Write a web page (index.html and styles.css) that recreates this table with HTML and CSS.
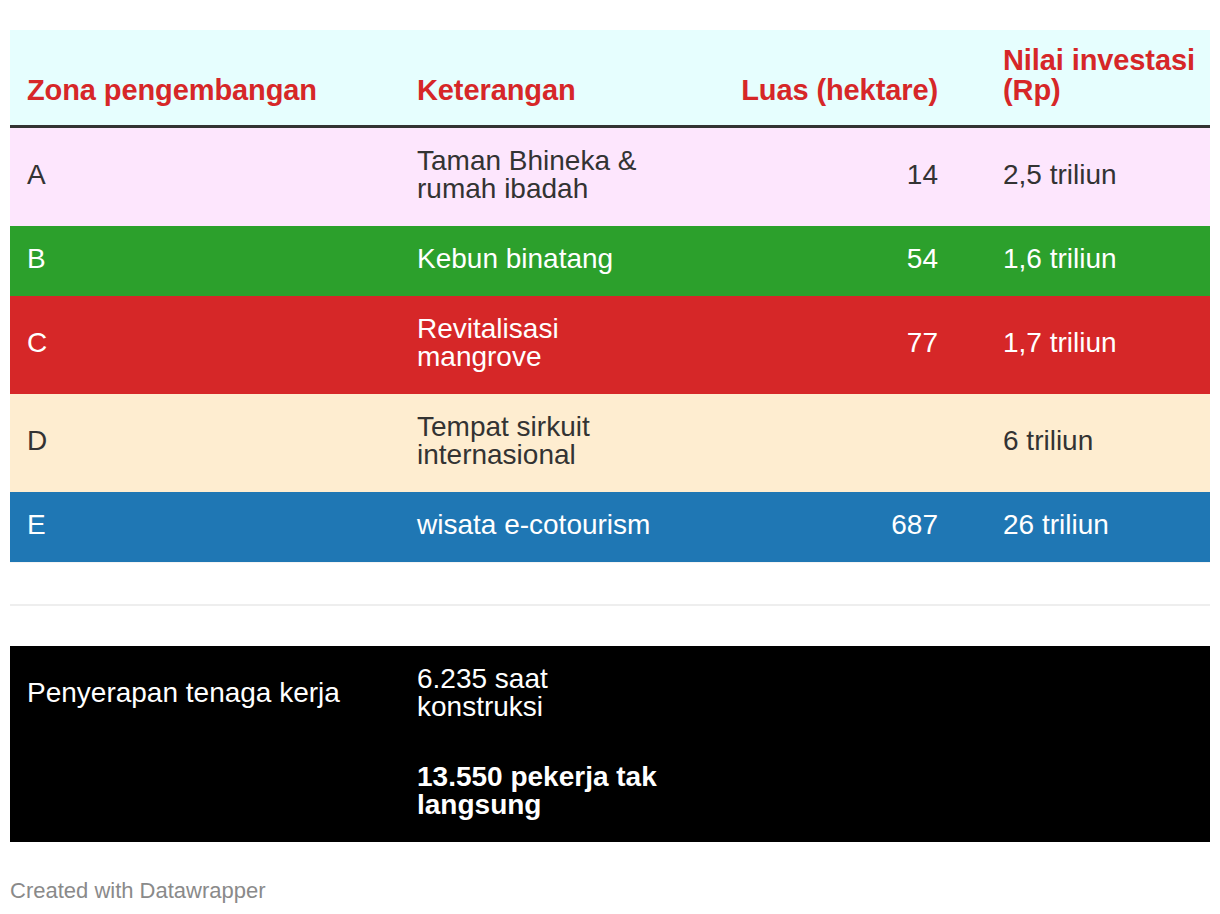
FILE: index.html
```html
<!DOCTYPE html>
<html lang="id">
<head>
<meta charset="utf-8">
<title>Zona pengembangan</title>
<link rel="stylesheet" href="styles.css">
</head>
<body>
<div class="chart">
  <table class="dw-table">
    <colgroup>
      <col class="c1"><col class="c2"><col class="c3"><col class="c4">
    </colgroup>
    <thead>
      <tr class="head">
        <th class="col1">Zona pengembangan</th>
        <th class="col2">Keterangan</th>
        <th class="col3 num">Luas (hektare)</th>
        <th class="col4">Nilai investasi (Rp)</th>
      </tr>
    </thead>
    <tbody>
      <tr class="row pink">
        <td class="col1">A</td>
        <td class="col2">Taman Bhineka &amp; rumah ibadah</td>
        <td class="col3 num">14</td>
        <td class="col4">2,5 triliun</td>
      </tr>
      <tr class="row green">
        <td class="col1">B</td>
        <td class="col2">Kebun binatang</td>
        <td class="col3 num">54</td>
        <td class="col4">1,6 triliun</td>
      </tr>
      <tr class="row red">
        <td class="col1">C</td>
        <td class="col2">Revitalisasi mangrove</td>
        <td class="col3 num">77</td>
        <td class="col4">1,7 triliun</td>
      </tr>
      <tr class="row peach">
        <td class="col1">D</td>
        <td class="col2">Tempat sirkuit internasional</td>
        <td class="col3 num"></td>
        <td class="col4">6 triliun</td>
      </tr>
      <tr class="row blue">
        <td class="col1">E</td>
        <td class="col2">wisata e-cotourism</td>
        <td class="col3 num">687</td>
        <td class="col4">26 triliun</td>
      </tr>
      <tr class="spacer">
        <td colspan="4"></td>
      </tr>
      <tr class="gap">
        <td colspan="4"></td>
      </tr>
      <tr class="row black">
        <td class="col1 top">Penyerapan tenaga kerja</td>
        <td class="col2 stack">
          <p class="para">6.235 saat konstruksi</p>
          <p class="para strong">13.550 pekerja tak langsung</p>
        </td>
        <td class="col3"></td>
        <td class="col4"></td>
      </tr>
    </tbody>
  </table>
  <div class="footer">Created with Datawrapper</div>
</div>
</body>
</html>
```

FILE: styles.css
```css
html, body {
  margin: 0;
  padding: 0;
  background: #ffffff;
}

body {
  font-family: "Liberation Sans", Arial, Helvetica, sans-serif;
  color: #333333;
}

.chart {
  padding: 30px 10px 0 10px;
}

.dw-table {
  width: 1200px;
  table-layout: fixed;
  border-collapse: collapse;
  border-spacing: 0;
}

.c1 { width: 390px; }
.c2 { width: 300px; }
.c3 { width: 255px; }
.c4 { width: 255px; }

.head {
  background: #e6fefe;
}

.head th {
  font-size: 29px;
  line-height: 30px;
  font-weight: 700;
  letter-spacing: -0.1px;
  color: #d62728;
  text-align: left;
  vertical-align: bottom;
  padding: 15px 17px 20px 17px;
  border-bottom: 3px solid #333333;
}

.head th.num {
  text-align: right;
}

.head th.col4 {
  padding-right: 12px;
}

.row td {
  font-size: 28px;
  line-height: 28px;
  vertical-align: middle;
  padding: 19px 17px 23px 17px;
}

.row td.col2 {
  padding-right: 33px;
}

.row td.col4,
.head th.col4 {
  padding-left: 48px;
}

.head th.col2 {
  padding-right: 33px;
}

.row td.num {
  text-align: right;
}

.pink { background: #fde6fd; color: #333333; }
.green { background: #2ca02c; color: #ffffff; }
.red { background: #d62728; color: #ffffff; }
.peach { background: #feedd0; color: #333333; }
.blue { background: #1f77b4; color: #ffffff; }
.black { background: #000000; color: #ffffff; }

.spacer td {
  height: 41px;
  padding: 0;
  border-top: 1px solid #f4f4f4;
  border-bottom: 2px solid #eeeeee;
}

.gap td {
  height: 40px;
  padding: 0;
}

.black td {
  vertical-align: top;
}

.black td.top {
  padding-top: 33px;
}

.black td.stack {
  padding-top: 19px;
  padding-bottom: 23px;
}

.para {
  margin: 0;
}

.para + .para {
  margin-top: 42px;
}

.strong {
  font-weight: 700;
}

.footer {
  margin-top: 36px;
  font-size: 22px;
  line-height: 26px;
  color: #8a8a8a;
}
```
